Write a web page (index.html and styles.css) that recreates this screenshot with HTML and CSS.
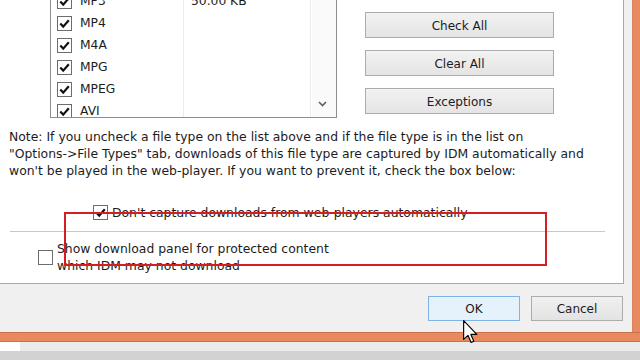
FILE: index.html
```html
<!DOCTYPE html>
<html>
<head>
<meta charset="utf-8">
<link rel="stylesheet" href="styles.css">
</head>
<body>
<div class="screen">
  <div class="window">
    <div class="dialog">
      <div class="panel">
        <div class="top">
          <div class="list">
            <div class="rows">
              <div class="row"><span class="name"><svg class="cb" viewBox="0 0 15 15"><rect x="0.5" y="0.5" width="14" height="14" fill="#fff" stroke="#6d6d6d"/><path d="M3.3 7.6 L6.2 10.6 L11.8 4.2" fill="none" stroke="#111" stroke-width="2.2"/></svg>MP3</span><span class="size">50.00 KB</span></div>
              <div class="row"><span class="name"><svg class="cb" viewBox="0 0 15 15"><rect x="0.5" y="0.5" width="14" height="14" fill="#fff" stroke="#6d6d6d"/><path d="M3.3 7.6 L6.2 10.6 L11.8 4.2" fill="none" stroke="#111" stroke-width="2.2"/></svg>MP4</span><span class="size"></span></div>
              <div class="row"><span class="name"><svg class="cb" viewBox="0 0 15 15"><rect x="0.5" y="0.5" width="14" height="14" fill="#fff" stroke="#6d6d6d"/><path d="M3.3 7.6 L6.2 10.6 L11.8 4.2" fill="none" stroke="#111" stroke-width="2.2"/></svg>M4A</span><span class="size"></span></div>
              <div class="row"><span class="name"><svg class="cb" viewBox="0 0 15 15"><rect x="0.5" y="0.5" width="14" height="14" fill="#fff" stroke="#6d6d6d"/><path d="M3.3 7.6 L6.2 10.6 L11.8 4.2" fill="none" stroke="#111" stroke-width="2.2"/></svg>MPG</span><span class="size"></span></div>
              <div class="row"><span class="name"><svg class="cb" viewBox="0 0 15 15"><rect x="0.5" y="0.5" width="14" height="14" fill="#fff" stroke="#6d6d6d"/><path d="M3.3 7.6 L6.2 10.6 L11.8 4.2" fill="none" stroke="#111" stroke-width="2.2"/></svg>MPEG</span><span class="size"></span></div>
              <div class="row"><span class="name"><svg class="cb" viewBox="0 0 15 15"><rect x="0.5" y="0.5" width="14" height="14" fill="#fff" stroke="#6d6d6d"/><path d="M3.3 7.6 L6.2 10.6 L11.8 4.2" fill="none" stroke="#111" stroke-width="2.2"/></svg>AVI</span><span class="size"></span></div>
            </div>
            <div class="scrollbar">
              <svg class="chev" viewBox="0 0 9 6"><path d="M1 1 L4.5 4.5 L8 1" fill="none" stroke="#606060" stroke-width="1.6"/></svg>
            </div>
          </div>
          <div class="btns">
            <button class="btn" aria-label="More"></button>
            <button class="btn">Check All</button>
            <button class="btn">Clear All</button>
            <button class="btn">Exceptions</button>
          </div>
        </div>
        <p class="note">Note: If you uncheck a file type on the list above and if the file type is in the list on<br>"Options-&gt;File Types" tab, downloads of this file type are captured by IDM automatically and<br>won't be played in the web-player. If you want to prevent it, check the box below:</p>
        <div class="opt opt1">
          <svg class="cb" viewBox="0 0 15 15"><rect x="0.5" y="0.5" width="14" height="14" fill="#fff" stroke="#6d6d6d"/><path d="M3.3 7.6 L6.2 10.6 L11.8 4.2" fill="none" stroke="#111" stroke-width="2.2"/></svg>
          <span>Don't capture downloads from web-players automatically</span>
        </div>
        <div class="sep"></div>
        <div class="opt opt2">
          <svg class="cb" viewBox="0 0 15 15"><rect x="0.5" y="0.5" width="14" height="14" fill="#fff" stroke="#6d6d6d"/></svg>
          <span>Show download panel for protected content<br>which IDM may not download</span>
        </div>
      </div>
      <div class="footer">
        <button class="btn2 ok">OK</button>
        <button class="btn2">Cancel</button>
      </div>
    </div>
    <div class="edge-right"></div>
  </div>
  <div class="edge-bottom"></div>
  <div class="strip"><div class="strip-white"></div></div>
  <div class="strip-gray"></div>
  <div class="highlight"></div>
  <svg class="cursor" viewBox="0 0 13 21" width="15" height="24"><path d="M0.5 0.5 L0.5 17 L4.3 13.4 L7 19.6 L9.4 18.6 L6.8 12.6 L12 12.6 Z" fill="#fff" stroke="#000" stroke-width="1" stroke-linejoin="round"/></svg>
</div>
</body>
</html>
```
FILE: styles.css
```css
html, body {
  margin: 0;
  padding: 0;
  background: #f0f0f0;
}
.screen {
  position: relative;
  width: 640px;
  height: 360px;
  overflow: hidden;
  display: flex;
  flex-direction: column;
  font-family: "DejaVu Sans", Verdana, sans-serif;
  color: #1c1c1c;
}
.window {
  display: flex;
  height: 332px;
  flex: none;
}
.dialog {
  width: 632px;
  background: #f0f0f0;
  display: flex;
  flex-direction: column;
}
.panel {
  width: 623px;
  height: 283px;
  background: #fff;
  border-right: 1px solid #a9a9a9;
  border-bottom: 1px solid #a9a9a9;
  display: flex;
  flex-direction: column;
  overflow: hidden;
  flex: none;
}
.top {
  display: flex;
  align-items: flex-start;
  margin-top: -26px;
  padding-left: 50px;
  gap: 28px;
}
.list {
  margin-top: 14px;
  width: 285px;
  height: 128px;
  border: 1px solid #8e8e8e;
  display: flex;
  overflow: hidden;
  box-sizing: content-box;
}
.rows {
  flex: 1;
  padding-top: 1px;
  background: linear-gradient(to right, transparent 132px, #ececec 132px, #ececec 133px, transparent 133px, transparent 259px, #ececec 259px, #ececec 260px, transparent 260px);
}
.row {
  height: 22px;
  display: flex;
  align-items: center;
  font-size: 12.3px;
}
.name {
  width: 133px;
  display: flex;
  align-items: center;
  padding-left: 6px;
  box-sizing: border-box;
}
.cb {
  width: 15px;
  height: 15px;
  flex: none;
}
.name .cb {
  margin-right: 8px;
}
.size {
  padding-left: 7px;
}
.scrollbar {
  width: 24px;
  background: #fafafa;
  display: flex;
  flex-direction: column;
  justify-content: flex-end;
  align-items: center;
  padding-bottom: 10px;
  padding-right: 3px;
  box-sizing: border-box;
}
.chev {
  width: 9px;
  height: 6px;
}
.btns {
  display: flex;
  flex-direction: column;
  gap: 12px;
}
.btn {
  width: 189px;
  height: 26px;
  background: linear-gradient(#f2f2f2, #e4e4e4);
  border: 1px solid #acacac;
  font-family: "DejaVu Sans", Verdana, sans-serif;
  font-size: 12px;
  color: #1c1c1c;
  padding: 2px 0 0;
}
.note {
  margin: 10px 0 0 9px;
  font-size: 12.4px;
  line-height: 17px;
}
.opt {
  display: flex;
  align-items: center;
  font-size: 12.4px;
  line-height: 17px;
}
.opt .cb {
  margin-right: 4px;
}
.opt1 {
  margin-top: 25px;
  padding-left: 93px;
}
.sep {
  height: 1px;
  background: #c8c8c8;
  margin: 10px 18px 0 10px;
}
.opt2 {
  margin-top: 8px;
  padding-left: 38px;
}
.footer {
  display: flex;
  justify-content: flex-end;
  gap: 11px;
  padding-top: 12px;
  padding-right: 9px;
}
.btn2 {
  width: 92px;
  height: 25px;
  background: linear-gradient(#f0f0f0, #e3e3e3);
  border: 1px solid #adadad;
  font-family: "DejaVu Sans", Verdana, sans-serif;
  font-size: 12px;
  color: #1c1c1c;
  padding: 0;
}
.btn2.ok {
  background: #e5f1fb;
  border-color: #7fb2e6;
}
.edge-right {
  width: 8px;
  background: #e8895e;
  border-left: 1px solid #d9845f;
  box-sizing: border-box;
}
.edge-bottom {
  height: 10px;
  flex: none;
  background: #e8895e;
  border-top: 1px solid #c9714e;
  border-bottom: 1px solid #c9714e;
  box-sizing: border-box;
}
.strip {
  height: 9px;
  flex: none;
  background: #ebebeb;
}
.strip-white {
  width: 20px;
  height: 100%;
  background: #fff;
}
.strip-gray {
  flex: 1;
  background: #d2d2d2;
}
.highlight {
  position: absolute;
  left: 64px;
  top: 212px;
  width: 479px;
  height: 50px;
  border: 2px solid #d41e24;
}
.cursor {
  position: absolute;
  left: 463px;
  top: 320px;
}
```
